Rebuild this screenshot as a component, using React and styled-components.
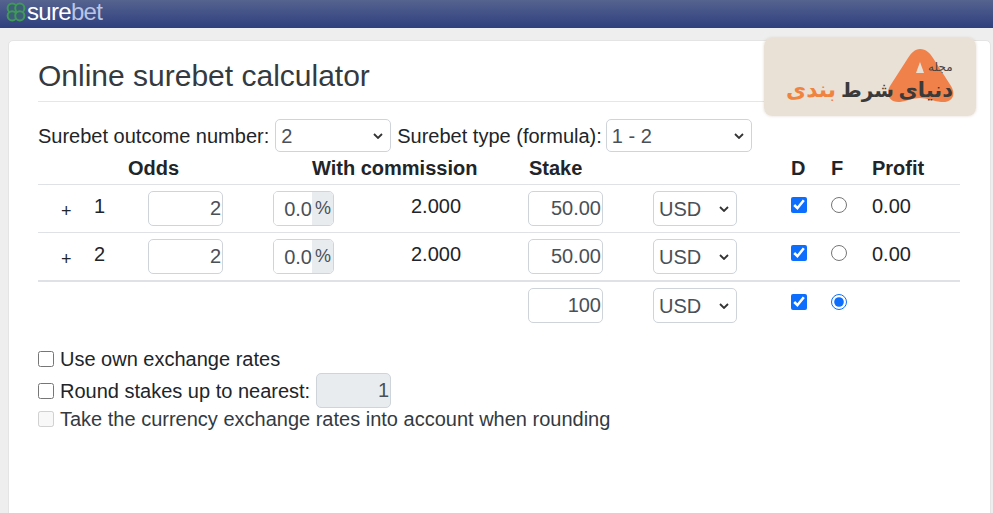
import React from 'react';
import styled, { createGlobalStyle } from 'styled-components';

const GlobalStyle = createGlobalStyle`
  html, body {
    margin: 0;
    height: 100%;
    overflow: hidden;
    background: #eeeeee;
  }
  * {
    box-sizing: border-box;
  }
`;

const chevron =
  "url(\"data:image/svg+xml,%3Csvg xmlns='http://www.w3.org/2000/svg' width='10' height='6' viewBox='0 0 10 6'%3E%3Cpath d='M1 1l4 4 4-4' fill='none' stroke='%23333' stroke-width='1.8'/%3E%3C/svg%3E\")";

const Page = styled.div`
  font-family: "Liberation Sans", Arial, sans-serif;
  font-size: 20px;
  line-height: 30px;
  color: #212529;
  accent-color: #0d6efd;
`;

const TopBar = styled.header`
  height: 28px;
  display: flex;
  align-items: flex-start;
  padding-left: 6px;
  background: linear-gradient(#55638f, #2f3f7e);
`;

const Brand = styled.div`
  display: flex;
  align-items: center;
  gap: 1px;
  height: 24px;
  font-size: 24px;
  line-height: 24px;
  letter-spacing: -0.7px;
  color: #ffffff;

  span {
    margin-left: -1px;
    color: #b9c5e4;
  }
`;

const Card = styled.main`
  position: relative;
  margin: 12px 2px 0 8px;
  height: 490px;
  padding: 15px 30px 0 29px;
  background: #ffffff;
  border: 1px solid #e4e4e4;
  border-radius: 5px;
`;

const Title = styled.h1`
  margin: 0;
  height: 46px;
  font-size: 30px;
  font-weight: 400;
  line-height: 40px;
  color: #343a40;
  border-bottom: 1px solid #e6e6e6;
`;

const OptionsRow = styled.div`
  display: flex;
  align-items: center;
  gap: 6px;
  margin-top: 17px;
  height: 33px;
`;

const NativeSelect = styled.select`
  appearance: none;
  width: ${(p) => p.$width}px;
  height: 33px;
  padding: 0 20px 0 5px;
  font: inherit;
  color: #495057;
  background: #ffffff ${chevron} no-repeat right 7px center;
  border: 1px solid #ced4da;
  border-radius: 5px;
`;

const FormulaSelect = styled(NativeSelect)`
  margin-left: -2px;
`;

const HeadRow = styled.div`
  display: grid;
  grid-template-columns: 90px 184px 217px 262px 40px 41px 88px;
  height: 33px;
  padding-top: 2px;
  font-weight: 700;
  border-bottom: 1px solid #dee2e6;

  > div {
    line-height: 28px;
  }
`;

const Row = styled.div`
  display: grid;
  grid-template-columns: 56px 54px 125px 138px 117px 125px 138px 40px 41px 88px;
  align-items: start;
  height: ${(p) => (p.$last ? 49 : 48)}px;
  padding-top: 6px;
  border-bottom: ${(p) => (p.$last ? '2px solid #dee2e6' : '1px solid #dee2e6')};
  ${(p) => p.$bare && 'border-bottom: 0;'}
`;

const Plus = styled.div`
  padding-left: 23px;
  padding-top: 5px;
  font-size: 18px;
`;

const Cell = styled.div`
  line-height: 30px;
`;

const NumberInput = styled.input`
  display: block;
  width: 75px;
  height: 35px;
  padding: 0 1px 0 0;
  font: inherit;
  text-align: right;
  color: #495057;
  background: ${(p) => (p.disabled ? '#e9ecef' : '#ffffff')};
  border: 1px solid #ced4da;
  border-radius: 5px;
  outline: none;
`;

const RateGroup = styled.div`
  display: flex;
  width: 61px;
  height: 35px;
  color: #495057;
  border: 1px solid #ced4da;
  border-radius: 5px;
  overflow: hidden;
`;

const RateInput = styled.input`
  width: 38px;
  padding: 0;
  font: inherit;
  text-align: right;
  color: #495057;
  border: 0;
  outline: none;
`;

const RateSuffix = styled.div`
  flex: 1;
  padding-left: 1px;
  font-size: 18px;
  text-align: center;
  line-height: 33px;
  background: #e9ecef;
`;

const CurrencySelect = styled(NativeSelect)`
  width: 84px;
  height: 35px;
`;

const Tick = styled.input`
  display: block;
  width: 16px;
  height: 16px;
  margin: 6px 0 0;
`;

const Settings = styled.div`
  margin-top: 14px;
`;

const SettingRow = styled.label`
  display: flex;
  align-items: center;
  gap: 6px;
  height: ${(p) => p.$height}px;
  color: ${(p) => (p.$dim ? '#343a40' : '#212529')};

  input[type='checkbox'] {
    width: 16px;
    height: 16px;
    margin: 0;
  }
`;

const Logo = styled.div`
  position: absolute;
  top: -3px;
  right: 14px;
  width: 212px;
  height: 78px;
  background: rgba(232, 223, 213, 0.97);
  border-radius: 8px;
  box-shadow: 0 0 3px rgba(180, 160, 140, 0.4);
  overflow: hidden;
`;

const LogoBlob = styled.svg`
  position: absolute;
  left: 123px;
  top: 10px;
`;

const LogoWords = styled.div`
  position: absolute;
  left: 22px;
  top: 36px;
  width: 167px;
  display: flex;
  justify-content: space-between;
  align-items: center;
  font-family: "DejaVu Sans", sans-serif;
  font-size: 21px;
  font-weight: 700;
  line-height: 32px;
  letter-spacing: 0;
  white-space: nowrap;
`;

const LogoWord = styled.span`
  color: ${(p) => p.$color};
  font-size: ${(p) => p.$size}px;
`;

const LogoSmall = styled.span`
  position: absolute;
  left: 164px;
  top: 22px;
  font-family: "DejaVu Sans", sans-serif;
  font-size: 12px;
  line-height: 14px;
  color: #4a4340;
`;

const Clover = () => (
  <svg width="20" height="20" viewBox="0 0 20 20" fill="#3d5f78" stroke="#3f9a57" strokeWidth="2">
    <circle cx="6.2" cy="6.2" r="4.6" />
    <circle cx="13.8" cy="6.2" r="4.6" />
    <circle cx="6.2" cy="13.8" r="4.6" />
    <circle cx="13.8" cy="13.8" r="4.6" />
  </svg>
);

const rows = [
  { id: 1, stake: '50.00' },
  { id: 2, stake: '50.00' },
];

const App = () => {
  return (
    <Page>
      <GlobalStyle />
      <TopBar>
        <Brand>
          <Clover />
          sure<span>bet</span>
        </Brand>
      </TopBar>
      <Card>
        <Title>Online surebet calculator</Title>
        <Logo>
          <LogoBlob width="68" height="56" viewBox="0 0 68 56">
            <path
              d="M33 1 C39 1 43 5 46 10 L64 38 C70 48 64 55 54 54 C46 53 40 50 33 50 C26 50 20 53 13 54 C3 55 -2 47 3 38 L21 10 C24 5 28 1 33 1 Z"
              fill="#f0814a"
            />
            <path d="M33 14 L37 25 L29 25 Z" fill="#e8dfd5" />
          </LogoBlob>
          <LogoWords>
            <LogoWord $color="#f0843f" $size={22}>بندی</LogoWord>
            <LogoWord $color="#3a3a3a" $size={20}>شرط</LogoWord>
            <LogoWord $color="#3a3a3a" $size={21}>دنیای</LogoWord>
          </LogoWords>
          <LogoSmall>مجله</LogoSmall>
        </Logo>
        <OptionsRow>
          <span>Surebet outcome number:</span>
          <NativeSelect $width={116} defaultValue="2">
            <option>2</option>
            <option>3</option>
          </NativeSelect>
          <span>Surebet type (formula):</span>
          <FormulaSelect $width={146} defaultValue="1 - 2">
            <option>1 - 2</option>
          </FormulaSelect>
        </OptionsRow>
        <HeadRow>
          <div />
          <div>Odds</div>
          <div>With commission</div>
          <div>Stake</div>
          <div>D</div>
          <div>F</div>
          <div>Profit</div>
        </HeadRow>
        {rows.map((row, i) => (
          <Row key={row.id} $last={i === rows.length - 1}>
            <Plus>+</Plus>
            <Cell>{row.id}</Cell>
            <NumberInput defaultValue="2" />
            <RateGroup>
              <RateInput defaultValue="0.0" />
              <RateSuffix>%</RateSuffix>
            </RateGroup>
            <Cell>2.000</Cell>
            <NumberInput defaultValue={row.stake} />
            <CurrencySelect defaultValue="USD">
              <option>USD</option>
            </CurrencySelect>
            <Tick type="checkbox" defaultChecked />
            <Tick type="radio" name="fixed" />
            <Cell>0.00</Cell>
          </Row>
        ))}
        <Row $bare>
          <div />
          <div />
          <div />
          <div />
          <div />
          <NumberInput defaultValue="100" />
          <CurrencySelect defaultValue="USD">
            <option>USD</option>
          </CurrencySelect>
          <Tick type="checkbox" defaultChecked />
          <Tick type="radio" name="fixed" defaultChecked />
          <div />
        </Row>
        <Settings>
          <SettingRow $height={29}>
            <input type="checkbox" />
            Use own exchange rates
          </SettingRow>
          <SettingRow $height={35}>
            <input type="checkbox" />
            Round stakes up to nearest:
            <NumberInput disabled defaultValue="1" />
          </SettingRow>
          <SettingRow $height={21} $dim>
            <input type="checkbox" disabled />
            Take the currency exchange rates into account when rounding
          </SettingRow>
        </Settings>
      </Card>
    </Page>
  );
};

export default App;
